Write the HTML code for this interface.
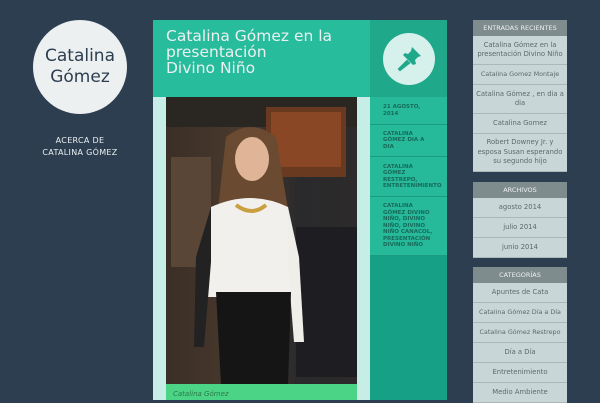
<!DOCTYPE html>
<html><head><meta charset="utf-8"><style>
*{margin:0;padding:0;box-sizing:border-box}
body{width:600px;height:400px;overflow:hidden;background:#2c3e50;font-family:"DejaVu Sans","Liberation Sans",sans-serif;position:relative}
.circle{position:absolute;left:33px;top:20px;width:94px;height:94px;border-radius:50%;background:#ecf0f1;color:#2c3e50;font-size:17px;line-height:21px;text-align:center;padding-top:26px}
.about{position:absolute;left:20px;top:135px;width:120px;text-align:center;color:#ecf0f1;font-size:8px;line-height:12px;letter-spacing:.3px}
.title{position:absolute;left:153px;top:20px;width:217px;height:77px;background:#26bc9c;color:#ecf0f1;font-size:15.5px;line-height:16px;padding:8px 13px}
.pinbox{position:absolute;left:370px;top:20px;width:77px;height:77px;background:#1fa98a}
.pin{position:absolute;left:13px;top:13px;width:52px;height:52px;border-radius:50%;background:#d6f1ec}
.content{position:absolute;left:153px;top:97px;width:217px;height:303px;background:#c6ede6}
.photo{position:absolute;left:166px;top:97px;width:191px;height:288px;overflow:hidden;background:linear-gradient(90deg,#3a2e26,#4a3a2e 40%,#2a2a2c 70%,#2c2a2a)}
.cap{position:absolute;left:166px;top:384px;width:191px;height:16px;background:#4cd486;color:#2a7a4a;font-size:7px;font-style:italic;padding:6px 7px}
.meta{position:absolute;left:370px;top:97px;width:77px;height:303px;background:#16a085}
.m{background:#26b99a;border-bottom:1px solid #1a9a80;color:#176b5a;font-size:5.5px;font-weight:bold;line-height:6.5px;padding:0 13px;display:flex;align-items:center}
.side{position:absolute;left:473px;width:94px}
.h{background:#7f8c8d;color:#ecf0f1;font-size:6.5px;text-align:center;height:16px;line-height:16px}
.i{background:#c9d6d7;border-bottom:1px solid #aab8ba;color:#5c6a6c;font-size:6.8px;line-height:9.5px;text-align:center;display:flex;align-items:center;justify-content:center;padding:0 3px}
.n{white-space:nowrap;font-size:6.4px;padding:0}
</style></head><body>
<div class="circle">Catalina<br>Gómez</div>
<div class="about">ACERCA DE<br>CATALINA GÓMEZ</div>
<div class="title">Catalina Gómez en la presentación<br>Divino Niño</div>
<div class="pinbox"><div class="pin"><svg width="52" height="52" viewBox="0 0 52 52"><g fill="#1fa98a"><path d="M29 14 L38 23 L35 24 L32 27 L33 31 L30 32 L20 22 L22 20 L25 21 L28 18 Z"/><path d="M24 28 L16 36 L17 37 L26 30 Z" stroke="#1fa98a" stroke-width="2"/></g></svg></div></div>
<div class="content"></div>
<div class="photo">
<svg width="191" height="288" viewBox="0 0 191 288">
<rect x="0" y="0" width="191" height="30" fill="#2a2622"/>
<rect x="100" y="10" width="80" height="70" fill="#6a3a20"/>
<rect x="105" y="15" width="70" height="55" fill="#a0502a" opacity=".6"/>
<rect x="5" y="60" width="40" height="110" fill="#5a4636"/>
<rect x="130" y="130" width="61" height="150" fill="#1e1e22"/>
<path d="M60 40 Q85 20 110 40 L125 130 L50 130 Z" fill="#6a4a30"/>
<ellipse cx="86" cy="62" rx="17" ry="22" fill="#e0b496"/>
<path d="M45 110 Q85 92 122 110 L128 200 L40 200 Z" fill="#f2f0ec"/>
<path d="M45 110 L30 160 L28 250 L38 250 L45 165 Z" fill="#222"/>
<path d="M122 110 L133 160 L138 245 L128 245 L122 170 Z" fill="#f0eee8"/>
<path d="M50 195 L125 195 L122 288 L55 288 Z" fill="#151515"/>
<path d="M70 108 Q86 120 100 108" stroke="#c9a040" stroke-width="4" fill="none"/>
</svg></div>
<div class="cap">Catalina Gómez</div>
<div class="meta">
<div class="m" style="height:28px;border-top:0">21 AGOSTO,<br>2014</div>
<div class="m" style="height:32px">CATALINA<br>GÓMEZ DIA A<br>DIA</div>
<div class="m" style="height:40px">CATALINA<br>GÓMEZ<br>RESTREPO,<br>ENTRETENIMIENTO</div>
<div class="m" style="height:59px">CATALINA<br>GÓMEZ DIVINO<br>NIÑO, DIVINO<br>NIÑO, DIVINO<br>NIÑO CANACOL,<br>PRESENTACIÓN<br>DIVINO NIÑO</div>
</div>
<div class="side" style="top:20px">
<div class="h">ENTRADAS RECIENTES</div>
<div class="i" style="height:29px">Catalina Gómez en la presentación Divino Niño</div>
<div class="i n" style="height:20px">Catalina Gomez Montaje</div>
<div class="i" style="height:29px">Catalina Gómez , en dia a dia</div>
<div class="i" style="height:20px">Catalina Gomez</div>
<div class="i" style="height:38px">Robert Downey Jr. y esposa Susan esperando su segundo hijo</div>
</div>
<div class="side" style="top:182px">
<div class="h">ARCHIVOS</div>
<div class="i" style="height:20px">agosto 2014</div>
<div class="i" style="height:20px">julio 2014</div>
<div class="i" style="height:20px">junio 2014</div>
</div>
<div class="side" style="top:267px">
<div class="h">CATEGORÍAS</div>
<div class="i" style="height:20px">Apuntes de Cata</div>
<div class="i n" style="height:20px">Catalina Gómez Día a Día</div>
<div class="i n" style="height:20px">Catalina Gómez Restrepo</div>
<div class="i" style="height:20px">Día a Día</div>
<div class="i" style="height:20px">Entretenimiento</div>
<div class="i" style="height:20px">Medio Ambiente</div>
</div>
</body></html>
